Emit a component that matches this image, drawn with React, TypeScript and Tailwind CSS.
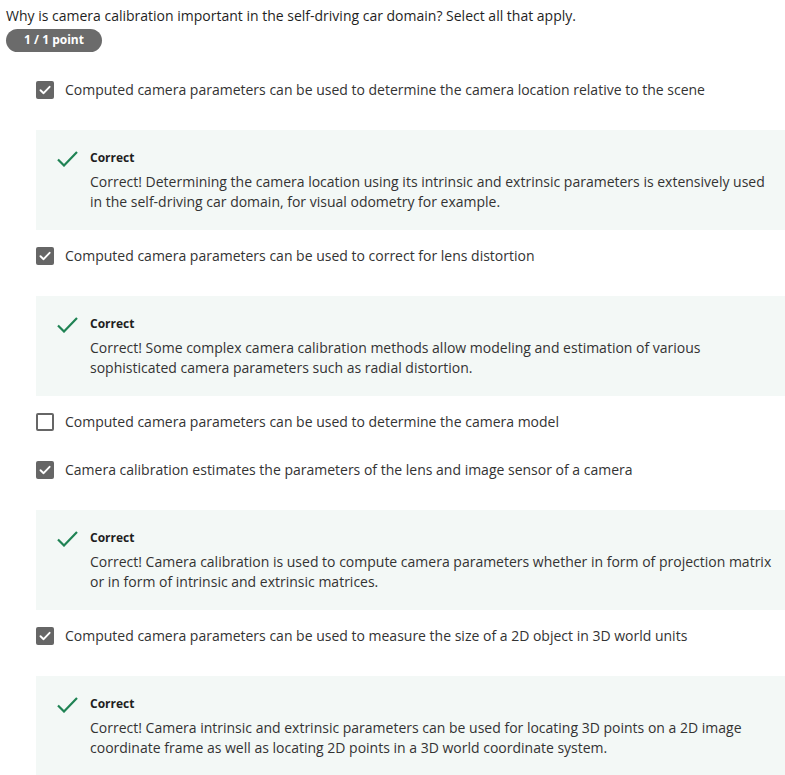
import React from "react";

type Choice = {
  label: string;
  checked: boolean;
  feedback?: string;
};

const choices: Choice[] = [
  {
    label: "Computed camera parameters can be used to determine the camera location relative to the scene",
    checked: true,
    feedback:
      "Correct! Determining the camera location using its intrinsic and extrinsic parameters is extensively used in the self-driving car domain, for visual odometry for example.",
  },
  {
    label: "Computed camera parameters can be used to correct for lens distortion",
    checked: true,
    feedback:
      "Correct! Some complex camera calibration methods allow modeling and estimation of various sophisticated camera parameters such as radial distortion.",
  },
  {
    label: "Computed camera parameters can be used to determine the camera model",
    checked: false,
  },
  {
    label: "Camera calibration estimates the parameters of the lens and image sensor of a camera",
    checked: true,
    feedback:
      "Correct! Camera calibration is used to compute camera parameters whether in form of projection matrix or in form of intrinsic and extrinsic matrices.",
  },
  {
    label: "Computed camera parameters can be used to measure the size of a 2D object in 3D world units",
    checked: true,
    feedback:
      "Correct! Camera intrinsic and extrinsic parameters can be used for locating 3D points on a 2D image coordinate frame as well as locating 2D points in a 3D world coordinate system.",
  },
];

function CheckBox({ checked }: { checked: boolean }) {
  if (!checked) {
    return <span className="w-[18px] h-[18px] shrink-0 rounded-[2px] border-2 border-[#666666] bg-white" />;
  }
  return (
    <span className="w-[18px] h-[18px] shrink-0 rounded-[2px] bg-[#666666] flex items-center justify-center">
      <svg width="14" height="14" viewBox="0 0 14 14" fill="none">
        <path d="M2.5 7.2 L5.6 10.2 L11.6 3.8" stroke="white" strokeWidth="1.9" strokeLinecap="round" strokeLinejoin="round" />
      </svg>
    </span>
  );
}

function Feedback({ text }: { text: string }) {
  return (
    <div className="mt-[30.5px] bg-[#f3f8f6] pt-[20px] pb-[17.5px] pl-[21px] pr-[6px] flex gap-[12px]">
      <svg width="21" height="16" viewBox="0 0 21 16" fill="none" className="shrink-0 mt-[1px]">
        <path d="M1 8.5 L7 14.5 L20 1" stroke="#1f8354" strokeWidth="2.2" />
      </svg>
      <div>
        <div className="text-[12px] leading-[16px] font-bold text-[#1f1f1f]">Correct</div>
        <p className="mt-[6px] text-[14px] leading-[20px] text-[#333333]">{text}</p>
      </div>
    </div>
  );
}

export default function App() {
  return (
    <div className="w-[785px] h-[775px] overflow-hidden bg-white text-[#333333] font-['Open_Sans',sans-serif]">
      <div className="pl-[6px] pt-[6px]">
        <p className="text-[14px] leading-[20px] text-[#1f1f1f]">
          Why is camera calibration important in the self-driving car domain? Select all that apply.
        </p>
        <span className="mt-[2px] inline-flex items-center justify-center w-[96px] h-[23px] rounded-full bg-[#6b6b6b] text-white text-[12px] font-bold">
          1 / 1 point
        </span>
      </div>
      <div className="pl-[36px] pt-[28px]">
        {choices.map((c, idx) => (
          <div key={idx} className={c.feedback ? "mb-4" : "mb-7"}>
            <label className="flex items-center gap-[11px] h-[20px]">
              <CheckBox checked={c.checked} />
              <span className="text-[14px] leading-[20px] whitespace-nowrap">{c.label}</span>
            </label>
            {c.feedback && <Feedback text={c.feedback} />}
          </div>
        ))}
      </div>
    </div>
  );
}
